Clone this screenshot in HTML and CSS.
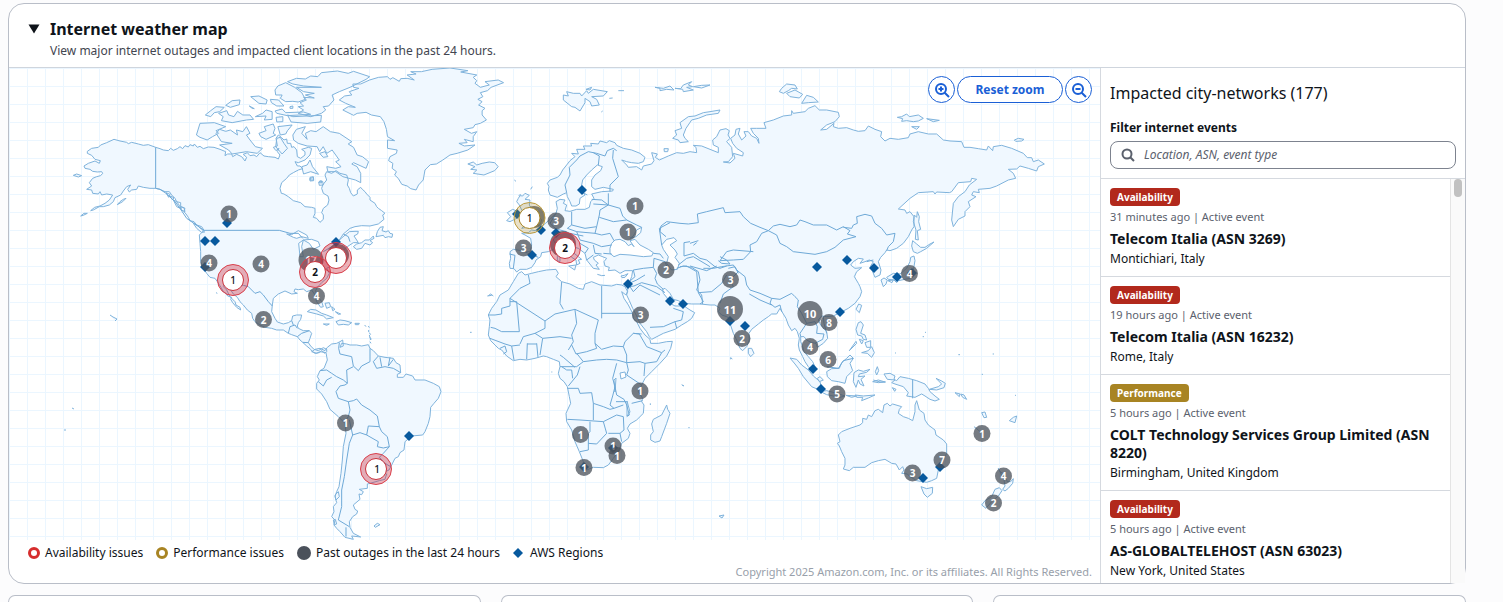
FILE: index.html
```html
<!DOCTYPE html>
<html lang="en">
<head>
<meta charset="utf-8">
<title>Internet weather map</title>
<link rel="stylesheet" href="styles.css">
</head>
<body>
<main class="page">
<section class="card">
  <header class="card-head">
    <button class="toggle" type="button" aria-label="Collapse section" aria-expanded="true">
      <svg width="12" height="10" viewBox="0 0 12 10" aria-hidden="true"><path d="M0.5 0.5H11.5L6 9.5Z" fill="#0f141a"/></svg>
    </button>
    <div>
      <h2 class="title">Internet weather map</h2>
      <p class="subtitle">View major internet outages and impacted client locations in the past 24 hours.</p>
    </div>
  </header>
  <div class="card-body">
    <div class="map-col">
      <svg class="map" viewBox="9 68 1091 472" role="img" aria-label="World map of internet outages">
        <defs>
          <pattern id="grid" x="9" y="86" width="18" height="18" patternUnits="userSpaceOnUse"><path d="M.5 0V18M0 .5H18" class="grid-line"/></pattern>
          <path id="dia" d="M0-5L5 0 0 5-5 0Z"/>
          <g id="land">
            <g transform="translate(60 60) scale(.33333)">
              <path d="M82 274L95 265 115 262 122 255 140 248 162 238 180 243 200 247 205 251 215 247 235 252 250 256 265 254 287 262 300 266 310 270 325 272 332 265 340 271 352 266 360 260 368 266 375 257 385 261 390 254 400 258 403 252 412 262 420 259 430 266 445 261 462 262 480 268 497 275 495 287 503 282 515 282 518 290 530 283 545 290 555 303 560 292 550 283 562 278 570 287 582 285 590 290 600 278 612 288 625 290 645 292 655 297 660 285 652 275 657 265 648 272 640 262 652 258 650 245 648 235 655 225 665 233 672 240 680 237 682 250 692 250 695 262 702 260 710 270 712 290 722 295 735 285 735 275 725 268 745 262 755 265 750 285 735 300 715 308 705 305 712 318 720 318 728 326 715 330 700 338 688 345 680 355 665 368 660 385 664 400 672 402 685 410 700 422 722 428 735 440 755 442 765 445 765 460 760 472 770 475 780 487 790 478 790 465 785 458 790 445 803 435 807 420 804 408 790 400 785 385 788 375 800 360 795 345 800 335 815 340 828 332 840 340 860 345 865 360 862 375 868 385 872 398 880 408 892 402 892 390 902 382 907 388 915 395 920 402 930 412 930 420 945 430 950 440 955 445 965 452 975 460 968 465 972 478 955 492 930 498 905 497 885 500 870 505 850 522 838 540 852 528 868 515 885 514 895 514 893 522 882 528 890 540 895 548 880 548 862 560 845 575 840 590 825 612 800 625 808 640 800 655 785 668 772 682 767 692 770 705 785 725 790 740 782 742 770 725 765 705 755 690 740 695 730 687 715 689 705 687 702 695 712 700 695 702 675 693 655 702 640 715 637 735 635 755 645 775 652 786 670 792 685 788 695 782 698 768 710 765 725 765 722 778 715 788 712 798 715 805 730 812 748 812 755 820 750 835 745 848 752 858 762 868 775 872 790 863 800 868 800 875 795 880 785 872 778 878 765 880 755 873 752 868 740 858 728 847 720 840 712 830 695 824 685 820 670 810 650 810 635 805 615 802 600 795 585 785 578 775 575 760 562 750 550 735 540 725 532 712 520 702 512 690 500 680 493 673 490 680 500 690 510 710 525 725 528 735 540 742 542 750 530 742 518 728 512 718 515 712 503 708 498 700 490 695 483 682 472 665 465 655 450 652 440 640 430 625 422 605 422 575 420 550 418 525 425 518 432 511 425 500 410 495 402 485 390 482 385 472 378 462 372 455 375 445 362 440 362 428 350 425 345 415 335 405 328 395 315 395 300 388 287 385 270 385 250 382 235 378 230 388 215 390 208 396 203 388 212 375 200 380 190 393 182 405 165 413 160 425 148 435 130 440 118 440 100 450 92 452 104 442 120 438 135 430 148 420 158 405 140 402 125 405 120 395 115 402 98 400 95 390 80 388 95 378 88 368 98 355 110 350 122 347 128 340 125 335 112 336 98 334 90 328 75 325 72 318 85 310 105 303 118 310 121 302 105 298 95 286 82 280Z"/>
              <path d="M400 490L412 496 425 508 434 516 424 517 410 505Z"/>
              <path d="M40 346L50 342 65 347 55 351Z"/>
              <path d="M62 468L72 460 82 460 70 466Z"/>
              <path d="M172 434L180 425 190 418 198 415 188 425Z"/>
              <path d="M340 420L350 425 358 436 363 446 350 440ZM330 408L342 413 338 420ZM362 440L372 443 375 455 364 450ZM318 398L330 403 326 412Z"/>
              <path d="M948 530L952 515 960 502 970 500 966 512 978 516 985 512 990 520 998 522 996 532 985 530 975 533 970 526Z"/>
              <path d="M880 560L890 552 905 548 915 540 928 540 940 528 942 535 930 542 938 548 930 555 915 550 905 565 890 568Z"/>
              <path d="M750 352L760 350 761 362 750 363ZM776 366L788 364 790 375 778 376Z"/>
              <path d="M742 755L752 748 768 750 785 760 800 765 820 773 800 777 790 768 770 762Z"/>
              <path d="M828 785L840 780 855 782 875 788 865 795 850 793 835 795ZM885 790H898L896 794H886ZM790 792L808 792 800 796Z"/>
              <path d="M795 730L808 728 812 740 800 745ZM815 740L825 748 818 752ZM826 755L842 762 835 763Z"/>
              <path d="M468 698L472 700M914 795L918 800M925 798L928 803M928 818L932 824M930 832L934 838M930 845L933 850"/>
            </g>
            <g transform="scale(.35714 .33333)">
              <path d="M950 300L965 288 985 285 978 275 1005 265 990 262 988 252 1010 252 1035 240 1060 232 1085 230 1092 238 1100 233 1118 244 1122 236 1140 235 1160 240 1140 225 1165 222 1150 215 1180 215 1210 208 1260 204 1310 212 1290 216 1335 225 1325 232 1335 242 1330 250 1345 262 1370 255 1358 245 1395 240 1410 248 1375 262 1365 272 1345 278 1352 290 1338 298 1350 305 1340 315 1358 325 1350 332 1350 345 1362 360 1345 370 1330 374 1325 383 1300 388 1320 400 1335 395 1325 410 1325 425 1300 418 1308 428 1285 430 1300 438 1330 435 1310 450 1280 460 1260 465 1240 480 1222 492 1205 494 1190 510 1185 540 1172 555 1165 570 1150 566 1140 558 1125 553 1115 535 1105 525 1110 515 1098 505 1100 490 1088 482 1092 470 1110 460 1112 450 1085 445 1085 420 1105 422 1085 410 1082 388 1075 365 1065 350 1040 345 1025 337 1000 340 990 346 960 330 975 320 995 322 968 310Z"/>
              <path d="M805 245L830 235 855 237 870 228 890 230 900 218 945 213 975 220 990 214 1035 230 1025 238 980 262 950 275 930 285 935 300 920 318 905 320 912 330 900 340 870 350 835 340 850 330 835 320 850 318 840 308 858 300 850 292 880 294 855 285 880 280 850 275 830 262 900 262 850 258 820 252Z"/>
              <path d="M770 270L778 258 800 248 825 262 845 278 855 298 835 306 820 304 800 305 785 295 790 285 772 285Z"/>
              <path d="M805 345L820 350 900 346 898 366 860 370 815 366ZM770 333L790 327 800 338 850 336 870 343 805 347 775 340Z"/>
              <path d="M575 345L590 332 605 320 628 322 615 335 600 338 590 350ZM632 316L650 302 672 300 670 314 645 322ZM612 340L635 332 640 345 655 350 665 334 680 345 700 345 710 358 690 360 650 368 620 362 625 350ZM702 290L725 288 748 300 745 312 725 310ZM698 318L712 326 706 325ZM735 340L745 330 762 335 762 358 740 360 745 348 715 350ZM757 298L780 300 795 318 775 318 760 308ZM773 352L792 350 792 365 775 366ZM812 320L820 318 820 325 812 325Z"/>
              <path d="M550 405L560 370 600 368 632 380 605 392 612 400 595 410 580 420 560 412Z"/>
              <path d="M605 400L615 388 632 394 645 390 665 405 662 390 680 395 690 380 700 400 690 405 700 420 715 440 735 445 720 460 690 455 650 462 640 450 615 435 650 430 620 425Z"/>
              <path d="M725 400L745 392 740 380 765 372 770 385 765 400 772 405 745 418 730 410ZM778 380L818 375 805 392 800 402 785 405ZM775 415L785 412 795 430 805 445 790 462 772 440Z"/>
              <path d="M820 405L830 388 855 380 845 400 860 418 855 400 870 392 885 395 905 380 925 395 950 400 985 425 975 432 990 442 1000 465 1015 470 1032 485 1025 505 990 488 985 492 1000 500 1010 520 1010 548 995 540 960 530 940 515 918 515 915 500 940 505 955 500 940 485 950 480 930 450 915 460 905 440 895 455 888 440 860 438 835 430 822 420Z"/>
              <path d="M845 500L860 495 868 480 875 500 892 523 870 515 850 522ZM895 460L910 455 918 470 905 472Z"/>
              <path d="M868 535L878 533 878 540 868 540ZM895 543L900 542 901 549 895 548Z"/>
              <path d="M1310 492L1325 486 1335 495 1350 490 1370 486 1385 488 1395 500 1385 512 1355 525 1325 520 1335 510 1318 508 1330 500Z"/>
            </g>
            <g transform="translate(290 320) scale(.33333)">
              <path d="M65 95L75 88 90 85 105 92 112 82 125 72 140 70 150 65 158 60 160 78 150 82 155 70 170 72 180 75 200 75 215 78 235 74 240 85 250 92 265 108 285 112 310 115 318 128 330 135 332 158 322 163 322 172 340 172 348 162 368 168 375 180 405 180 430 190 448 200 453 215 445 235 432 250 422 262 420 290 415 310 405 335 398 345 365 348 345 365 342 390 330 398 325 410 315 415 305 435 297 450 285 455 275 450 290 462 285 478 268 482 240 490 232 492 232 505 208 508 220 515 215 524 207 522 210 538 190 555 195 568 203 573 200 582 188 590 178 605 180 622 190 640 212 651 185 648 190 658 165 652 150 635 140 625 132 615 135 600 125 590 132 575 130 560 140 548 135 530 140 515 147 500 153 460 157 420 160 380 168 340 165 310 145 290 120 268 110 245 95 222 80 207 80 190 88 180 82 170 90 152 102 145 112 120 108 98 90 95 80 100Z"/>
              <path d="M252 618L262 610 270 614 256 622ZM130 600L136 598 140 612 133 614ZM135 525L145 515 148 530 138 540Z"/>
              <path d="M540 37H545M238 45L242 60M236 30V36"/>
            </g>
            <g transform="translate(560 60) scale(.33333)">
              <path d="M0 345L8 330 20 315 30 302 45 290 35 280 55 282 50 268 75 268 70 258 95 258 92 250 115 252 120 243 140 248 148 242 165 248 170 256 190 265 215 270 240 280 255 292 250 305 235 310 215 308 200 305 185 300 200 315 205 322 230 320 245 330 250 318 275 312 282 302 275 278 292 282 286 292 298 300 325 288 350 278 370 280 390 275 410 278 408 262 400 256 425 258 450 268 475 278 475 262 460 255 458 240 470 230 480 210 498 206 508 212 504 225 510 235 500 245 515 262 518 290 505 305 490 306 510 309 525 295 520 280 548 288 550 278 530 265 518 250 512 235 525 225 528 208 540 205 535 222 545 240 558 228 552 215 565 215 575 228 590 235 597 250 595 235 580 220 572 205 590 205 618 205 612 188 640 180 670 168 695 165 695 152 700 160 735 155 745 145 765 137 778 150 800 150 835 157 838 170 825 185 800 195 782 210 800 208 822 190 820 200 835 205 860 203 880 210 895 214 915 212 925 198 945 208 965 215 962 230 975 243 990 235 1015 238 1045 233 1050 222 1075 215 1105 222 1130 222 1150 240 1170 243 1205 245 1212 262 1230 262 1255 266 1280 270 1285 258 1298 272 1300 260 1325 256 1355 265 1390 280 1402 293 1415 293 1420 305 1435 300 1453 312 1435 320 1430 333 1405 325 1380 318 1370 327 1345 328 1360 340 1367 355 1345 360 1310 378 1290 385 1255 388 1258 398 1240 395 1235 405 1248 410 1225 425 1230 440 1215 455 1215 468 1195 478 1180 500 1175 480 1178 450 1180 430 1195 410 1215 395 1228 375 1250 358 1235 355 1232 365 1195 368 1175 395 1168 398 1130 396 1125 402 1120 395 1075 398 1050 415 1015 447 1035 450 1040 460 1050 455 1062 470 1062 500 1055 510 1045 530 1030 550 1010 565 990 572 980 570 975 578 962 592 955 605 963 630 960 645 945 652 938 635 932 618 940 605 928 600 915 605 900 610 910 597 895 595 880 605 872 615 885 625 905 623 890 635 883 650 895 670 900 680 905 695 900 710 885 730 865 745 840 758 820 768 800 770 785 768 775 780 782 795 800 815 803 835 790 850 772 862 768 850 755 848 740 840 732 830 722 830 722 845 728 860 732 875 745 890 758 905 765 920 760 935 745 920 735 905 728 890 718 870 715 855 718 835 712 815 705 805 695 812 685 795 678 775 670 762 660 745 650 762 635 762 625 770 610 780 595 792 575 808 567 820 568 840 560 860 548 872 540 865 530 840 520 820 510 790 508 775 500 770 485 765 475 755 480 745 465 735 450 735 420 732 395 732 370 730 355 722 340 718 330 700 315 685 308 688 310 700 320 712 330 730 345 738 365 738 370 726 375 740 390 750 404 758 395 775 382 785 365 795 345 808 310 820 275 838 268 830 260 815 240 790 230 768 218 745 208 722 200 705 203 690 205 675 215 650 218 632 195 632 180 640 165 630 145 632 148 622 135 618 132 605 140 595 115 585 100 592 103 600 115 610 108 615 118 628 100 625 92 615 80 600 75 580 55 565 45 562 35 550 25 555 30 570 45 582 65 598 55 600 60 610 50 615 48 600 35 592 20 575 15 562 -5 560 -20 568 -35 575 -55 578 -58 590 -72 600 -75 608 -85 622 -100 628 -120 628 -130 636 -138 626 -150 625 -152 610 -148 595 -150 575 -140 568 -115 572 -90 575 -85 555 -88 535 -105 525 -115 520 -95 518 -85 510 -75 512 -55 500 -30 478 -12 460 -8 445 -12 425 0 418 15 420 10 430 20 435 15 452 30 454 50 448 75 448 88 442 92 425 102 415 95 402 125 395 158 393 160 388 130 382 105 388 95 380 95 360 105 345 122 332 127 320 112 315 95 330 80 345 68 360 65 375 65 390 75 405 60 415 58 432 48 438 35 438 30 425 22 410 20 398 10 402 -8 412 -30 405 -35 390 -33 380 -38 370 -30 360 -8 352Z"/>
              <path d="M10 105L25 108 20 95 40 100 60 100 65 108 80 92 85 100 100 88 142 95 130 108 95 110 110 118 118 135 95 138 90 125 75 115 75 128 60 153 45 142 35 140 10 120ZM78 88L95 82 90 90ZM175 92H192M148 115L158 114M124 156L128 153"/>
              <path d="M285 82L310 85 330 78 342 90 320 88 300 92 300 85ZM345 85L362 86 370 75 395 65 385 75 398 80 380 82 400 90 370 95 368 88ZM400 80L425 76 450 75 425 84Z"/>
              <path d="M338 235L350 225 345 212 365 205 360 188 385 170 405 168 430 158 450 155 480 150 475 160 440 165 415 175 395 180 378 205 370 225 375 235 385 245 360 248 355 240Z"/>
              <path d="M312 266L325 266 323 275 313 275Z"/>
              <path d="M658 95L665 85 680 72 705 75 712 87 695 85 685 92 670 100ZM680 100L705 90 728 103 718 114 690 110ZM725 130L740 106 760 112 775 126 745 128Z"/>
              <path d="M1012 172L1025 170 1040 162 1048 170 1075 165 1090 175 1075 183 1060 185 1040 182 1025 184 1028 176ZM1100 176L1138 181 1120 185ZM1055 200L1078 200 1070 208ZM1363 240L1375 235 1392 238 1385 243 1367 244Z"/>
            </g>
            <g transform="translate(470 130) scale(.33333)">
              <path d="M145 205L150 197 158 198 165 190 178 196 165 208 180 210 178 225 190 245 205 258 215 270 210 285 195 290 170 292 155 295 170 280 160 270 165 255 155 240 148 225 140 215Z"/>
              <path d="M112 248L128 238 145 245 140 265 120 275 110 272 122 260Z"/>
              <path d="M182 178L187 170M133 150L138 154M146 198L152 192M55 497L62 492 70 498M382 433L395 437 405 436M453 438L463 436 474 431 465 442 456 443ZM262 375L270 372 270 395 262 392ZM296 408L318 405 314 420ZM342 190L352 195"/>
            </g>
            <g transform="translate(480 270) scale(.33333)">
              <path d="M115 10L125 5 135 15 155 10 175 5 200 0 228 -2 235 10 228 20 245 35 270 42 295 55 310 58 315 42 335 35 360 45 395 48 410 43 425 45 435 50 443 65 438 75 425 65 432 85 445 105 458 130 460 145 470 155 480 175 495 195 510 208 512 220 535 220 560 215 577 214 572 235 560 258 540 280 515 305 495 325 485 345 475 365 488 385 485 395 492 405 490 430 470 450 450 462 442 475 450 490 445 505 425 520 415 545 400 565 385 585 370 593 340 592 320 600 308 590 310 575 298 545 285 515 275 480 260 455 258 430 272 400 268 380 262 350 252 335 240 325 235 310 240 290 238 275 220 268 200 260 190 258 165 265 140 270 120 268 100 272 80 258 65 240 55 235 45 225 32 212 25 195 28 170 30 150 25 135 35 115 50 95 60 75 85 60 100 35Z"/>
              <path d="M560 405L563 418 570 430 560 460 545 500 540 513 525 517 512 510 512 495 520 485 515 462 520 448 545 435Z"/>
              <path d="M22 78L35 76M214 306H217M608 345L612 348M511 400V405M625 473H629M753 264L757 267"/>
            </g>
            <g transform="translate(680 190) scale(.33333)">
              <path d="M695 168L698 152 710 162 722 172 735 172 750 162 762 156 740 175 722 185 712 190 700 185Z"/>
              <path d="M703 75L710 82 712 65 718 80 716 95 722 118 712 122 715 150 706 148 708 120 700 95Z"/>
              <path d="M692 202L702 198 705 212 700 240 690 265 675 268 655 272 650 278 642 270 625 268 620 262 640 250 660 252 680 235 690 215Z"/>
              <path d="M603 270L612 264 622 270 618 282 610 290ZM624 272L640 270 636 278Z"/>
              <path d="M528 358L536 342 545 346 538 368ZM205 475L215 475 222 490 212 500 205 490Z"/>
              <path d="M330 504L350 508 365 525 385 540 400 558 420 575 425 595 418 600 395 590 370 560 355 535 345 522Z"/>
              <path d="M420 604L440 602 470 610 495 618 480 622 440 614ZM498 616L530 618 515 622ZM525 615L550 618 585 615 565 624 545 632 548 622 530 622ZM580 570L600 576 618 576"/>
              <path d="M412 565L420 560 430 570 418 575ZM5 584L10 588M152 502V508"/>
            </g>
            <g transform="translate(800 320) scale(.33333)">
              <path d="M115 345L125 335 150 325 180 315 188 308 188 295 200 298 205 285 215 290 225 272 235 268 248 278 252 255 262 250 270 258 278 252 305 260 298 268 295 280 310 290 325 295 338 302 345 275 345 255 350 242 358 270 372 280 375 300 385 315 405 330 408 345 430 360 440 372 440 400 428 425 415 450 410 475 395 482 380 487 350 482 330 470 322 462 305 460 312 450 308 440 298 450 288 432 275 430 255 418 235 422 215 428 195 442 160 442 148 452 130 447 135 435 135 415 125 395 118 378 112 370 120 365Z"/>
              <path d="M363 500L380 506 398 502 397 520 382 532 372 522Z"/>
              <path d="M595 445L600 455 612 462 622 485 632 485 640 476 638 490 625 505 615 513 608 508 615 498 612 480ZM585 508L598 503 606 512 595 528 575 545 558 565 545 555 555 542 575 530Z"/>
              <path d="M252 162L270 160 285 168 282 178 290 182 300 170 325 175 350 182 375 192 385 205 390 215 405 228 418 238 405 243 390 238 375 228 365 222 345 232 320 228 325 218 310 200 285 192 275 188 285 180 262 178Z"/>
              <path d="M408 175L425 183 436 190 432 203 410 210 388 208 415 200 425 192Z"/>
              <path d="M80 155L95 146 118 145 125 128 140 115 150 105 160 115 150 130 158 152 140 170 135 190 115 185 95 182 82 170Z"/>
              <path d="M162 158L175 150 190 154 210 148 200 157 178 162 175 170 195 168 183 178 192 198 180 192 175 180 168 202 160 185Z"/>
              <path d="M175 8L183 5 190 15 182 40 195 45 200 60 190 58 185 48 173 45 168 28ZM178 58L190 62 185 72ZM195 68L212 62 212 82 200 82ZM185 98L205 92 215 80 223 98 215 112 202 100ZM148 92L158 78 168 64 170 70Z"/>
              <path d="M232 140L236 152 230 165 226 155ZM218 185L235 180 255 186 235 188ZM277 203L288 208 284 214Z"/>
              <path d="M465 218L480 222 478 230ZM482 222L492 225 500 238 488 232ZM545 278L555 276 560 292 552 293ZM628 302L640 292 650 288 645 308Z"/>
              <path d="M522 320L535 330 545 340M368 50H372M375 37H378M285 99H288M475 104H480M578 102H582M545 163H549M645 226H648"/>
            </g>
            <path d="M719 516L724 515 722 518ZM72 408L74 409M64 430H66M110 315L113 317 117 319 115 321"/>
          </g>
        </defs>
        <rect x="9" y="68" width="1091" height="472" fill="url(#grid)"/>
        <use href="#land" class="land-fill"/>
        <use href="#land" class="land-line"/>
        <g class="water">
          <g transform="translate(470 130) scale(.33333)">
            <path d="M425 340L435 330 450 328 465 335 475 347 485 342 492 350 480 332 495 328 510 345 535 358 550 368 545 378 520 380 480 375 450 373 432 380 420 370 420 355Z"/>
            <path d="M480 325L490 318 500 300 515 292 512 308 498 320Z"/>
            <path d="M575 345L590 328 612 323 620 332 600 345 615 360 622 372 615 382 628 400 622 418 605 420 590 400 595 380 580 358Z"/>
          </g>
          <g transform="translate(160 190) scale(.33333)">
            <path d="M380 132L395 134 405 128 415 122 440 135 445 145 425 140 410 145 400 142Z"/>
            <path d="M416 160L430 150 425 170 430 200 420 200ZM430 150L455 148 475 155 480 168 460 178 448 160Z"/>
          </g>
          <path d="M620 373L625 372 626 377 621 379ZM614 380L616 378 615 392ZM627 401L630 412 627 416Z"/>
        </g>
        <g class="borders">
          <g transform="translate(60 60) scale(.33333)">
            <path d="M287 262V385L300 388 318 400 345 425 360 445 380 475 432 511H658L690 520 715 520 728 535"/>
            <path d="M492 673L530 674 550 676 565 680 585 700 600 695 610 705 625 725 637 738M685 820L690 800 705 795 712 805M695 782L700 795M712 830L725 820 748 812M745 848L728 847M838 540L815 560 790 575M850 522L865 530 870 545"/>
          </g>
          <g transform="translate(290 320) scale(.33333)">
            <path d="M148 68L146 85 150 102 185 110 190 138 205 152 215 138 240 125 240 85M265 108L250 125 260 145 285 140 310 145 332 158M270 112L275 140M300 112L295 138 310 118M190 140L170 150 172 190M90 152L110 150 125 160 140 170 160 180 172 190 165 195 150 198 138 215 145 235 175 245 180 270 175 290 165 305M85 185L100 198 110 180 125 172M175 245L190 242 200 237 215 255 240 270 262 288 268 320 235 318 230 345 210 338 188 345 178 300M268 320L275 335 292 350 298 380 280 384 262 380 265 365 230 345M298 380L280 400 268 412 285 430 302 440M188 345L178 370 170 420 163 470 155 510 155 560 145 600 178 620M168 622V650"/>
          </g>
          <g transform="translate(480 270) scale(.33333)">
            <path d="M25 135L45 135 65 132 65 115 90 108 90 85 120 55 150 40 145 15M90 95H110L118 185H65L45 175 32 172M90 85L195 153 225 132 285 118 355 150M245 36L240 100 250 118M365 48V145M365 130H458M195 153L195 175 165 190 130 200 120 222M285 120L290 160 275 195 280 215 265 240M355 150L345 190 345 220 350 235 320 245 288 252 275 225M345 220L365 238 400 228 430 230 435 215 460 190 485 192M430 230L440 255 440 278 410 270 380 268 350 270 310 275 290 250"/>
            <path d="M165 190L188 205 240 200 275 205M188 205L180 255M142 220L140 268M170 220L174 262M142 222H170M95 228L102 270M120 225L95 228 75 222 30 205M60 235L75 228 80 245 70 252M240 290H290L310 275M245 290L260 300 275 300 278 325M300 290L292 315 265 348M262 355H295L300 370 335 368 340 400 340 450M262 448L300 450 370 455M340 400L370 410 390 418 402 415 390 405 398 378 405 350 398 325 410 280M330 455V485L325 490V540L300 545M325 520L350 522 380 490 370 455 410 435 430 440 432 480 420 490 385 490M420 490L425 515M405 350L410 375 432 388 440 405 448 435 440 440M402 415L430 405M440 278L480 275 495 280 492 318M460 190L478 192 500 230 545 248 555 240M545 248L530 275 495 280M440 278L445 300 440 315 485 345M455 400L488 392M408 395L440 395M240 255L250 262 285 292"/>
            <path d="M510 172L550 170 585 155 605 150 610 125 580 115M585 155L590 175M450 50L460 65 480 45 540 75"/>
          </g>
          <g transform="translate(470 130) scale(.33333)">
            <path d="M290 188L285 165 300 135 298 112 320 90 330 78 355 65 380 70 405 78 412 62 430 55 440 62M385 105L388 78 370 68M430 60L428 85 445 140 420 165 420 185M365 208L395 210 415 225 370 222M415 190L415 225 390 240 388 255 380 290 345 295 305 285 305 245M415 225L450 235 458 258 470 270 430 275 388 262M470 270L500 285 515 292M380 290L375 310 395 315 420 310 432 332M305 285L292 295 320 305 375 310M320 305L330 330 370 340 395 350 425 345M345 370L355 355 330 340M370 345L375 370 395 372M250 290L262 300 250 330 262 350M258 250L240 280 250 290M118 372L135 376 130 415M155 362L205 382M300 310L340 318M262 298L290 305M400 370L425 372M370 375L350 390"/>
            <path d="M490 420L520 415 550 412 552 385 585 395 590 408M550 370L570 372 580 385M550 412L560 430 555 445 562 462 580 478M525 435L500 450 478 460M490 420L495 440 478 455M478 470L492 468 515 458 560 470 585 488M620 415L640 408 665 412 685 425 690 450 680 480 695 495 698 522M625 405L650 385 670 380 720 410M575 345L568 295 600 278"/>
          </g>
          <g transform="translate(560 60) scale(.33333)">
            <path d="M318 530L300 515 303 498 320 485 360 490 385 492 415 488 412 462 440 455 490 443 495 458 540 455 550 470 572 490 600 502 625 512 640 498 660 493 690 500 710 495 720 480 735 485 760 495 800 495 830 510 850 500 870 512 862 522 888 530 850 540 825 562 800 575 765 583 700 575 680 560 660 550 650 525 625 512M850 502L875 505 880 495 892 490 890 470 915 463 935 468 945 490 965 505 980 525 1005 520 1000 545 985 560 980 572M625 512L605 520 590 545 570 555 572 575 550 598 520 600 480 602M372 588V548L390 545M372 588L400 580 420 595 440 600 465 620 480 625 500 618M480 602L500 575 520 570 580 575M480 590L500 600 510 612 485 610 475 602M505 625L525 620 535 640M390 550L415 542M400 556L410 548"/>
          </g>
          <g transform="translate(680 190) scale(.33333)">
            <path d="M160 225L170 240 195 260 200 285 210 300 240 310 275 325 300 328 335 310 345 320 355 330 352 350 365 370M275 325L270 340 285 352 300 345 305 365M275 345L240 330 208 312M130 312L160 290 150 270 175 245 170 240M60 342L70 335 55 308 95 305 125 280 140 255M0 230L20 228 50 245 55 308M30 228L80 242 110 228M70 235L100 235 125 230 160 225M365 370L380 400 360 430 362 440M380 400L405 395 412 410 410 430 432 432 428 448 405 460M430 380L432 400 440 430M130 312L120 340M440 530L475 535 490 512 520 505M580 210L560 215"/>
            <path d="M698 570V625"/>
          </g>
        </g>
        <g class="regions">
          <use href="#dia" x="227" y="223"/><use href="#dia" x="205" y="241"/><use href="#dia" x="215" y="241"/><use href="#dia" x="205" y="267"/><use href="#dia" x="336" y="242"/>
          <use href="#dia" x="582" y="190"/><use href="#dia" x="517" y="214"/><use href="#dia" x="541" y="230"/><use href="#dia" x="532" y="255"/><use href="#dia" x="556" y="233"/>
          <use href="#dia" x="628" y="284"/><use href="#dia" x="670" y="301"/><use href="#dia" x="683" y="304"/><use href="#dia" x="613" y="448"/><use href="#dia" x="584" y="467"/>
          <use href="#dia" x="730" y="321"/><use href="#dia" x="745" y="326"/><use href="#dia" x="840" y="312"/><use href="#dia" x="817" y="267"/><use href="#dia" x="847" y="260"/>
          <use href="#dia" x="874" y="268"/><use href="#dia" x="897" y="277"/><use href="#dia" x="912" y="273"/><use href="#dia" x="813" y="369"/><use href="#dia" x="821" y="389"/>
          <use href="#dia" x="409" y="436"/><use href="#dia" x="923" y="478"/><use href="#dia" x="940" y="467"/>
        </g>
        <g class="past">
          <circle cx="229" cy="214" r="8.5"/><text x="229" y="218">1</text>
          <circle cx="209" cy="263" r="8.5"/><text x="209" y="267">4</text>
          <circle cx="261" cy="264" r="8.5"/><text x="261" y="268">4</text>
          <circle cx="316.5" cy="296" r="8.5"/><text x="316.5" y="300">4</text>
          <circle cx="263.5" cy="319.5" r="8.5"/><text x="263.5" y="324">2</text>
          <circle cx="311" cy="260" r="12.5"/><text x="311" y="264">17</text>
          <circle cx="338" cy="255" r="11"/>
          <circle cx="635" cy="206" r="8.5"/><text x="635" y="210">1</text>
          <circle cx="628" cy="232" r="8.5"/><text x="628" y="236">1</text>
          <circle cx="523.5" cy="248" r="8.5"/><text x="523.5" y="252">3</text>
          <circle cx="556" cy="221" r="8.5"/><text x="556" y="225">3</text>
          <circle cx="534" cy="217" r="11"/><circle cx="563" cy="244" r="13"/>
          <circle cx="666" cy="270" r="8.5"/><text x="666" y="274">2</text>
          <circle cx="640.5" cy="315" r="8.5"/><text x="640.5" y="319">3</text>
          <circle cx="640" cy="391" r="8.5"/><text x="640" y="395">1</text>
          <circle cx="580.5" cy="434.5" r="8.5"/><text x="580.5" y="439">1</text>
          <circle cx="613" cy="446" r="8.5"/><text x="613" y="450">1</text>
          <circle cx="617" cy="455.5" r="8.5"/><text x="617" y="460">1</text>
          <circle cx="584" cy="467.5" r="8.5"/><text x="584" y="472">1</text>
          <circle cx="730.5" cy="279.5" r="8.5"/><text x="730.5" y="284">3</text>
          <circle cx="730" cy="309" r="13"/><text x="730" y="314" class="big">11</text>
          <circle cx="742" cy="338.5" r="8.5"/><text x="742" y="343">2</text>
          <circle cx="810" cy="313.5" r="12.5"/><text x="810" y="318" class="big">10</text>
          <circle cx="829" cy="322.5" r="8.5"/><text x="829" y="327">8</text>
          <circle cx="810" cy="346.5" r="8.5"/><text x="810" y="351">4</text>
          <circle cx="828" cy="359.5" r="8.5"/><text x="828" y="364">6</text>
          <circle cx="837" cy="394" r="8.5"/><text x="837" y="398">5</text>
          <circle cx="909.5" cy="273.5" r="8.5"/><text x="909.5" y="278">4</text>
          <circle cx="345.5" cy="423" r="8.5"/><text x="345.5" y="427">1</text>
          <circle cx="912.5" cy="473" r="8.5"/><text x="912.5" y="477">3</text>
          <circle cx="942" cy="460" r="8.5"/><text x="942" y="464">7</text>
          <circle cx="982" cy="433.5" r="8.5"/><text x="982" y="438">1</text>
          <circle cx="1003.5" cy="476" r="8.5"/><text x="1003.5" y="480">4</text>
          <circle cx="993.5" cy="503" r="8.5"/><text x="993.5" y="507">2</text>
        </g>
        <g class="active">
          <circle class="halo" cx="233" cy="280" r="15.5"/><circle class="core" cx="233" cy="280" r="10.5"/><text x="233" y="284">1</text>
          <circle class="halo" cx="336" cy="258" r="15.5"/><circle class="core" cx="336" cy="258" r="10.5"/><text x="336" y="262">1</text>
          <circle class="halo" cx="315" cy="272" r="15.5"/><circle class="core" cx="315" cy="272" r="10.5"/><text x="315" y="276" class="strong">2</text>
          <circle class="halo" cx="376" cy="469" r="15.5"/><circle class="core" cx="376" cy="469" r="10.5"/><text x="377" y="473">1</text>
          <circle class="halo" cx="565" cy="248" r="15.5"/><circle class="core" cx="565" cy="248" r="10.5"/><text x="565" y="252" class="strong">2</text>
          <g class="perf"><circle class="halo" cx="529.5" cy="218" r="15.5"/><circle class="core" cx="529.5" cy="218" r="10.5"/><text x="529.5" y="222">1</text></g>
        </g>
      </svg>
      <div class="zoom-tools">
        <button class="round-btn" type="button" aria-label="Zoom in"><svg width="16" height="16" viewBox="0 0 16 16" aria-hidden="true"><circle cx="7" cy="7" r="5"/><path d="M10.7 10.7L15 15M4.5 7H9.5M7 4.5V9.5"/></svg></button>
        <button class="reset-btn" type="button">Reset zoom</button>
        <button class="round-btn" type="button" aria-label="Zoom out"><svg width="16" height="16" viewBox="0 0 16 16" aria-hidden="true"><circle cx="7" cy="7" r="5"/><path d="M10.7 10.7L15 15M4.5 7H9.5"/></svg></button>
      </div>
      <ul class="legend">
        <li><span class="ring ring-red"></span>Availability issues</li>
        <li><span class="ring ring-gold"></span>Performance issues</li>
        <li><span class="dot"></span>Past outages in the last 24 hours</li>
        <li><svg class="legend-dia" width="10" height="10" viewBox="-5 -5 10 10" aria-hidden="true"><use href="#dia"/></svg>AWS Regions</li>
      </ul>
      <p class="copyright">Copyright 2025 Amazon.com, Inc. or its affiliates. All Rights Reserved.</p>
    </div>
    <aside class="side">
      <div class="side-head">
        <h3 class="side-title">Impacted city-networks (177)</h3>
        <label class="filter-label" for="filter">Filter internet events</label>
        <div class="search">
          <svg width="16" height="16" viewBox="0 0 16 16" aria-hidden="true"><circle cx="7" cy="7" r="4.5"/><path d="M10.2 10.2L14 14"/></svg>
          <input id="filter" type="text" placeholder="Location, ASN, event type">
        </div>
      </div>
      <div class="list-wrap">
        <ul class="events">
          <li><span class="badge badge-red">Availability</span><p class="when">31 minutes ago | Active event</p><h4>Telecom Italia (ASN 3269)</h4><p class="where">Montichiari, Italy</p></li>
          <li><span class="badge badge-red">Availability</span><p class="when">19 hours ago | Active event</p><h4>Telecom Italia (ASN 16232)</h4><p class="where">Rome, Italy</p></li>
          <li><span class="badge badge-gold">Performance</span><p class="when">5 hours ago | Active event</p><h4>COLT Technology Services Group Limited (ASN 8220)</h4><p class="where">Birmingham, United Kingdom</p></li>
          <li><span class="badge badge-red">Availability</span><p class="when">5 hours ago | Active event</p><h4>AS-GLOBALTELEHOST (ASN 63023)</h4><p class="where">New York, United States</p></li>
        </ul>
        <div class="scroll-track"><div class="scroll-thumb"></div></div>
      </div>
    </aside>
  </div>
</section>
<div class="next-row"><section class="next-card"></section><section class="next-card"></section><section class="next-card"></section></div>
</main>
</body>
</html>
```
FILE: styles.css
```css
* { box-sizing: border-box; }
body { margin: 0; background: #fcfcfd; color: #0f141a; font-family: "Noto Sans", "Open Sans", sans-serif; font-size: 12px; line-height: 16px; }
h2, h3, h4, p, ul { margin: 0; padding: 0; }
ul { list-style: none; }
button, input { font: inherit; }
.page { display: flex; flex-direction: column; min-height: 100vh; padding: 3px 37px 0 8px; }
.card { background: #fff; border: 1px solid #b9bec8; border-radius: 16px; }
.card-head { display: flex; gap: 10px; padding: 12px 19px 7px; border-bottom: 1px solid #cfd5dd; }
.toggle { display: flex; align-items: center; height: 26px; padding: 0; border: 0; background: none; }
.title { font-size: 16px; line-height: 26px; font-weight: 700; }
.subtitle { line-height: 18px; color: #424650; }
.card-body { display: grid; grid-template-columns: minmax(0, 1fr) 365px; }
.map-col { position: relative; }
.map { display: block; width: 100%; height: auto; }
.grid-line { stroke: #ebf6ff; fill: none; }
.land-fill { fill: #f0f8ff; }
.land-line { fill: none; stroke: #7fb3dc; stroke-width: 1; }
.land-line, .borders, .water { stroke-linejoin: round; }
#land path, .borders path, .water path { vector-effect: non-scaling-stroke; }
.water { fill: #fff; stroke: #7fb3dc; }
.borders { fill: none; stroke: #6ea9d7; }
.regions, .legend-dia { fill: #07599e; }
.past circle { fill: #4b515b; fill-opacity: .76; }
.past text { fill: #fff; font-size: 10px; font-weight: 700; text-anchor: middle; }
.past .big { font-size: 11px; }
.active text { fill: #0f141a; font-size: 10px; font-weight: 500; text-anchor: middle; }
.active .strong { font-weight: 700; }
.halo { fill: #cc2030; fill-opacity: .35; stroke: #d9404c; }
.core { fill: #fff; stroke: #c9323c; }
.perf .halo { fill: #a88423; fill-opacity: .25; stroke: #bb9a3c; }
.perf .core { stroke: #a88423; }
.zoom-tools { position: absolute; top: 8px; right: 8px; display: flex; gap: 2px; }
.round-btn, .reset-btn { height: 27px; border: 1px solid #1a5fd6; border-radius: 14px; background: #fff; color: #1a5fd6; }
.round-btn { display: flex; align-items: center; justify-content: center; width: 27px; padding: 0; }
.round-btn svg { fill: none; stroke: #1a5fd6; stroke-width: 2; }
.reset-btn { width: 106px; padding: 0; font-weight: 700; }
.legend { display: flex; align-items: center; gap: 13px; padding: 5px 19px 0; }
.legend li { display: flex; align-items: center; gap: 5px; }
.ring { width: 12px; height: 12px; border: 3px solid #d62d2d; border-radius: 50%; }
.ring-gold { border-color: #a88423; }
.dot { width: 14px; height: 14px; border-radius: 50%; background: #4b515b; }
.legend-dia { margin-right: 2px; }
.copyright { padding: 3px 8px; text-align: right; font-size: 11px; color: #98a0aa; }
.side { display: flex; flex-direction: column; height: 0; min-height: 100%; border-left: 1px solid #d5d9df; }
.side-head { padding: 14px 9px 9px; }
.side-title { font-size: 16px; line-height: 22px; font-weight: 400; }
.filter-label { display: block; margin-top: 16px; line-height: 16px; font-weight: 700; }
.search { display: flex; align-items: center; gap: 8px; height: 28px; margin-top: 5px; padding: 0 9px; border: 1px solid #7d838f; border-radius: 8px; }
.search svg { flex: none; fill: none; stroke: #5b616d; stroke-width: 2; }
.search input { flex: 1; min-width: 0; padding: 0; border: 0; outline: 0; background: none; }
.search input::placeholder { color: #5b616d; font-style: italic; opacity: 1; }
.list-wrap { display: flex; flex: 1; min-height: 0; overflow: hidden; border-top: 1px solid #d5d9df; }
.events { flex: 1; min-width: 0; }
.events li { padding: 9px; border-bottom: 1px solid #d5d9df; }
.events li:last-child { border-bottom: 0; }
.badge { display: table; padding: 0 7px; border-radius: 4px; color: #fff; font-size: 10px; line-height: 18px; font-weight: 700; }
.badge-red { background: #b2291c; }
.badge-gold { background: #a88423; }
.when { margin-top: 3px; font-size: 11px; color: #5b616d; }
.events h4 { margin-top: 5px; font-size: 14px; line-height: 18px; font-weight: 700; }
.where { margin-top: 3px; }
.scroll-track { width: 15px; padding: 0 2px; border-left: 1px solid #e4e4e4; background: #fafafa; }
.scroll-thumb { width: 8px; height: 18px; margin: 0 auto; border-radius: 4px; background: #c1c1c1; }
.next-row { display: grid; flex: 1; grid-template-columns: repeat(3, 1fr); gap: 20px; margin-top: 11px; }
.next-card { background: #fff; border: 1px solid #b9bec8; border-bottom: 0; border-radius: 16px 16px 0 0; }
```
